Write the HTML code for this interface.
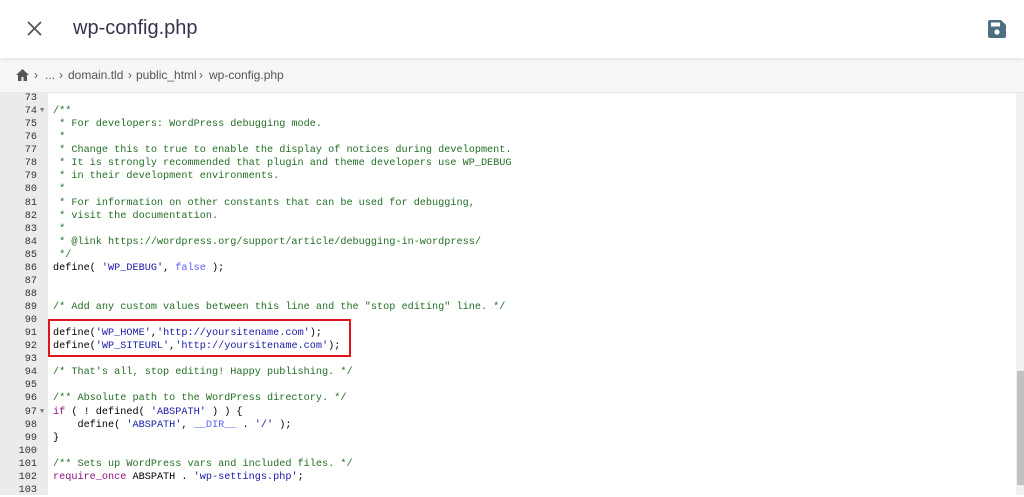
<!DOCTYPE html>
<html><head><style>
body{margin:0;width:1024px;height:495px;overflow:hidden;background:#fff;font-family:"Liberation Sans",sans-serif;position:relative}
.hdr{position:absolute;left:0;top:0;width:1024px;height:58px;background:#fff;box-shadow:0 1px 3px rgba(0,0,0,.12);z-index:2}
.title{position:absolute;left:73px;top:17px;font-size:20px;color:#36344d}
.bc{position:absolute;left:0;top:59px;width:1024px;height:33px;background:#f6f6f8;border-bottom:1px solid #e6e6e6}
.bc span{position:absolute;top:9px;font-size:12px;color:#555}
.gut{position:absolute;left:0;top:93px;width:48px;height:402px;background:#ebebeb}
.code{position:absolute;left:0;top:92px;font-family:"Liberation Mono",monospace;font-size:10.2px;line-height:13.07px;white-space:pre;color:#000}
.ln{display:inline-block;width:37px;text-align:right;color:#333}
.f{display:inline-block;width:16px;color:#777;font-size:7px;vertical-align:top;text-indent:3px}
.c{color:#236e24}.s{color:#1a1aa6}.k{color:#585cf6}.kw{color:#930f80}
.sb{position:absolute;left:1016px;top:93px;width:8px;height:402px;background:#f0f0f0}
.th{position:absolute;left:1017px;top:371px;width:7px;height:114px;background:#c1c1c1}
.box{position:absolute;left:48px;top:319px;width:299px;height:34px;border:2px solid #e0141e}
</style></head><body>
<div class="hdr">
<svg style="position:absolute;left:27px;top:21px" width="15" height="15" viewBox="0 0 15 15"><path d="M1 1L14 14M14 1L1 14" stroke="#555" stroke-width="1.8"/></svg>
<div class="title">wp-config.php</div>
<svg style="position:absolute;left:988px;top:20px" width="18" height="18" viewBox="0 0 18 18"><path d="M2 0h11l5 5v11a2 2 0 0 1-2 2H2a2 2 0 0 1-2-2V2a2 2 0 0 1 2-2z" fill="#4f6f82"/><rect x="3" y="2.5" width="9" height="4" fill="#fff"/><circle cx="9" cy="12" r="2.6" fill="#fff"/></svg>
</div>
<div class="bc">
<svg style="position:absolute;left:16px;top:10px" width="13" height="12" viewBox="0 0 13 12"><path d="M6.5 0L0 6h2v6h3.5V8h2v4H11V6h2z" fill="#555"/></svg>
<span style="left:34px">›</span><span style="left:45px">...</span><span style="left:59px">›</span><span style="left:68px">domain.tld</span><span style="left:128px">›</span><span style="left:136px">public_html</span><span style="left:199px">›</span><span style="left:209px">wp-config.php</span>
</div>
<div class="gut"></div>
<div class="code"><span class="ln">73</span><span class="f"></span>
<span class="ln">74</span><span class="f">▼</span><span class="c">/**</span>
<span class="ln">75</span><span class="f"></span><span class="c"> * For developers: WordPress debugging mode.</span>
<span class="ln">76</span><span class="f"></span><span class="c"> *</span>
<span class="ln">77</span><span class="f"></span><span class="c"> * Change this to true to enable the display of notices during development.</span>
<span class="ln">78</span><span class="f"></span><span class="c"> * It is strongly recommended that plugin and theme developers use WP_DEBUG</span>
<span class="ln">79</span><span class="f"></span><span class="c"> * in their development environments.</span>
<span class="ln">80</span><span class="f"></span><span class="c"> *</span>
<span class="ln">81</span><span class="f"></span><span class="c"> * For information on other constants that can be used for debugging,</span>
<span class="ln">82</span><span class="f"></span><span class="c"> * visit the documentation.</span>
<span class="ln">83</span><span class="f"></span><span class="c"> *</span>
<span class="ln">84</span><span class="f"></span><span class="c"> * @link https://wordpress.org/support/article/debugging-in-wordpress/</span>
<span class="ln">85</span><span class="f"></span><span class="c"> */</span>
<span class="ln">86</span><span class="f"></span>define( <span class="s">'WP_DEBUG'</span>, <span class="k">false</span> );
<span class="ln">87</span><span class="f"></span>
<span class="ln">88</span><span class="f"></span>
<span class="ln">89</span><span class="f"></span><span class="c">/* Add any custom values between this line and the "stop editing" line. */</span>
<span class="ln">90</span><span class="f"></span>
<span class="ln">91</span><span class="f"></span>define(<span class="s">'WP_HOME'</span>,<span class="s">'http://yoursitename.com'</span>);
<span class="ln">92</span><span class="f"></span>define(<span class="s">'WP_SITEURL'</span>,<span class="s">'http://yoursitename.com'</span>);
<span class="ln">93</span><span class="f"></span>
<span class="ln">94</span><span class="f"></span><span class="c">/* That's all, stop editing! Happy publishing. */</span>
<span class="ln">95</span><span class="f"></span>
<span class="ln">96</span><span class="f"></span><span class="c">/** Absolute path to the WordPress directory. */</span>
<span class="ln">97</span><span class="f">▼</span><span class="kw">if</span> ( ! defined( <span class="s">'ABSPATH'</span> ) ) {
<span class="ln">98</span><span class="f"></span>    define( <span class="s">'ABSPATH'</span>, <span class="k">__DIR__</span> . <span class="s">'/'</span> );
<span class="ln">99</span><span class="f"></span>}
<span class="ln">100</span><span class="f"></span>
<span class="ln">101</span><span class="f"></span><span class="c">/** Sets up WordPress vars and included files. */</span>
<span class="ln">102</span><span class="f"></span><span class="kw">require_once</span> ABSPATH . <span class="s">'wp-settings.php'</span>;
<span class="ln">103</span><span class="f"></span></div>
<div class="box"></div>
<div class="sb"></div><div class="th"></div>
</body></html>
